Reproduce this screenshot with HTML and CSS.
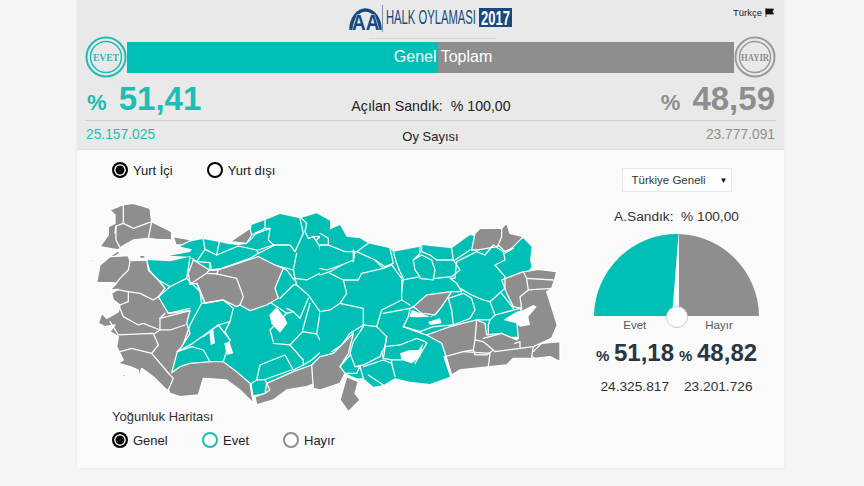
FILE: index.html
```html
<!DOCTYPE html>
<html lang="tr">
<head>
  <meta charset="UTF-8">
  <title>Halk Oylaması 2017</title>
  <link rel="stylesheet" href="styles.css">
</head>
<body>
<div class="panel">
  <header class="head">
    <div class="top">
      <svg class="logo" width="170" height="38" viewBox="0 0 170 38">
        <path d="M4 28 A14.500 20 0 0 1 33 28" class="arc"/>
        <text transform="translate(5 28) scale(.86 1)" class="aa">AA</text>
        <line x1="35.500" y1="3" x2="35.500" y2="30" stroke="#7b93ad"/>
        <text transform="translate(39 22) scale(.577 1)" class="halk">HALK OYLAMASI</text>
        <rect x="132" y="6" width="33" height="19" fill="#17497e"/>
        <text transform="translate(134 23) scale(.65 1)" class="yil">2017</text>
        <line x1="22" y1="36.500" x2="150" y2="36.500" stroke="#d4d8dc"/>
      </svg>
      <div class="lang">Türkçe
        <svg width="9" height="9" viewBox="0 0 9 9"><path d="M1 0v9M1 1h7.500l-1.200 2.500 1.200 2.500h-7.500z" fill="#111" stroke="#111" stroke-width=".8"/></svg>
      </div>
    </div>
    <div class="bar-row">
      <svg class="stamp" width="42" height="42" viewBox="0 0 42 42">
        <circle cx="21" cy="21" r="19.500" class="s-evet s-out"/><circle cx="21" cy="21" r="15.500" class="s-evet"/>
        <text x="21" y="25" class="s-txt t-evet" textLength="26" lengthAdjust="spacingAndGlyphs">EVET</text>
      </svg>
      <div class="bar">
        <div class="bar-fill"></div>
        <span class="bar-txt">Genel Toplam</span>
      </div>
      <svg class="stamp" width="42" height="42" viewBox="0 0 42 42">
        <circle cx="21" cy="21" r="19.500" class="s-hayir s-out"/><circle cx="21" cy="21" r="15.500" class="s-hayir"/>
        <text x="21" y="25" class="s-txt t-hayir" textLength="28" lengthAdjust="spacingAndGlyphs">HAYIR</text>
      </svg>
    </div>
    <div class="score-row">
      <div class="score teal"><span class="pct">%</span> 51,41</div>
      <div class="opened">Açılan Sandık:&nbsp; % 100,00</div>
      <div class="score grey"><span class="pct">%</span> 48,59</div>
    </div>
    <div class="count-row">
      <span class="teal">25.157.025</span>
      <span class="count-lbl">Oy Sayısı</span>
      <span class="grey">23.777.091</span>
    </div>
  </header>

  <main class="body">
    <section class="left">
      <div class="radios r-top">
        <label class="radio r-sel">Yurt İçi</label>
        <label class="radio r-off">Yurt dışı</label>
      </div>
      <svg class="map" width="480" height="218" viewBox="90 195 480 218">
        <!-- west half, traced at 3x from the map -->
        <g transform="translate(90 190) scale(.3333)">
          <polygon class="t" points="172,210 240,214 300,200 238,197 300,186 306,178 272,170 272,160 340,147 385,155 415,162 445,165 470,162 480,135 485,105 525,90 570,72 630,85 680,70 720,92 720,490 690,500 665,525 610,545 530,580 525,610 490,615 485,580 440,560 400,530 300,530 262,555 245,548 262,485 230,400 200,320 205,270 180,240"/>
          <g class="g">
            <polygon points="60,60 100,44 130,40 180,55 185,95 245,125 245,150 200,148 175,145 130,150 95,170 85,180 30,170 55,135 55,110 75,100 75,75"/>
            <polygon points="250,140 305,150 275,165 258,165"/>
            <polygon points="40,212 85,182 90,190 50,215"/>
            <polygon points="0,208 12,210 10,214 0,213"/>
            <polygon points="150,195 165,197 165,205 148,205"/>
            <polygon points="95,552 112,555 100,560"/>
            <polygon points="30,225 60,200 115,197 125,212 170,210 175,240 205,270 225,295 205,320 235,370 300,362 290,400 300,430 275,470 262,485 245,548 270,530 300,520 365,515 400,515 440,545 480,580 490,640 450,600 410,570 340,565 325,615 270,620 240,610 235,600 230,600 190,560 155,535 145,565 145,540 120,530 85,520 100,510 90,490 80,470 85,440 60,425 75,405 45,410 25,400 35,370 50,385 60,380 85,365 90,345 70,330 65,310 85,298 60,300 80,280 70,278 20,278"/>
            <polygon points="295,250 310,210 358,240 385,240 505,200 555,225 580,235 555,295 565,325 530,345 480,362 450,345 440,350 400,330 345,340 330,300 320,280 300,283"/>
            <polygon points="420,155 480,115 485,135 470,160"/>
            <polygon points="495,620 525,610 530,580 610,545 665,525 690,575 650,590 590,600 550,630 500,645"/>
          </g>
          <g class="lines">
            <polyline points="100,44 100,100 78,108 75,130"/>
            <polyline points="100,100 130,115 185,95 175,145"/>
            <polyline points="78,108 78,150 90,172"/>
            <polyline points="115,197 120,215 115,240 90,265 80,278"/>
            <polyline points="60,300 85,300 115,305 150,310 190,330 205,320"/>
            <polyline points="115,305 115,335 90,345"/>
            <polyline points="88,350 100,380 145,405 160,400 210,420"/>
            <polyline points="225,370 210,385 210,420 240,420 285,405"/>
            <polyline points="210,385 300,362"/>
            <polyline points="195,430 210,420"/>
            <polyline points="60,395 85,435 190,430 205,465 185,490 125,475 90,485"/>
            <polyline points="185,490 240,555 250,565 235,600"/>
            <polyline points="345,340 320,280"/>
            <polyline points="350,250 300,283"/>
            <polyline points="358,240 350,250 380,252 440,265 460,320 450,345"/>
            <polyline points="385,240 380,252"/>
            <polyline points="262,485 305,470 340,480 360,515"/>
            <polyline points="280,462 300,405 335,340 400,330 430,355 420,395 385,405 305,462 262,485"/>
            <polyline points="340,440 385,405 420,450 400,515"/>
            <polyline points="420,395 405,425 420,450"/>
            <polyline points="240,290 290,265 330,305 335,340"/>
            <polyline points="205,320 240,290 205,270"/>
            <polyline points="300,355 235,370"/>
            <polyline points="300,200 295,235 290,265"/>
            <polyline points="306,205 320,215 345,178 340,148"/>
            <polyline points="320,215 360,218 358,240"/>
            <polyline points="345,178 380,195 388,155"/>
            <polyline points="380,195 445,168"/>
            <polyline points="360,218 365,240"/>
            <polyline points="505,190 480,205 395,235 365,240"/>
            <polyline points="445,168 500,180 505,190"/>
            <polyline points="485,135 525,115 525,90"/>
            <polyline points="475,155 500,130 540,115 535,150 550,165 505,180"/>
            <polyline points="525,115 540,115"/>
            <polyline points="550,165 600,165 615,185 640,130 630,85"/>
            <polyline points="505,190 555,165"/>
            <polyline points="555,225 610,240 620,190"/>
            <polyline points="615,265 610,240"/>
            <polyline points="580,235 590,240 612,270"/>
            <polyline points="570,325 610,285 620,285 655,315 690,365"/>
            <polyline points="620,285 615,265 650,270 700,245 690,170 680,155 670,140 690,140 720,120"/>
            <polyline points="635,85 650,100 645,125 655,145 670,140"/>
            <polyline points="680,150 695,135"/>
            <polyline points="610,365 630,385 655,325"/>
            <polyline points="590,355 610,365"/>
            <polyline points="638,420 660,340"/>
            <polyline points="600,465 638,425 680,432 690,370"/>
            <polyline points="550,460 600,465 640,510 640,525"/>
            <polyline points="680,432 705,475 665,510 640,525 610,540 585,495 510,525 500,570 520,570 605,540"/>
            <polyline points="485,580 500,570"/>
            <polyline points="525,570 540,600 525,610"/>
            <polyline points="545,340 590,370 540,420 550,455"/>
            <polyline points="590,370 610,365"/>
          </g>
          <g class="w">
            <polygon points="538,375 560,352 585,385 592,400 570,428 545,402"/>
            <polygon points="358,425 370,420 375,460 362,465"/>
            <polygon points="403,460 418,455 430,490 410,495"/>
          </g>
        </g>
        <!-- east half -->
        <g transform="translate(320 210) scale(.3333)">
          <polygon class="t" points="0,20 25,60 60,45 80,80 120,85 145,100 210,115 220,125 300,110 305,105 395,115 450,75 470,80 480,110 540,110 610,85 635,110 630,150 635,170 620,190 600,300 600,380 520,380 400,420 370,440 390,500 330,522 270,515 225,505 190,525 160,530 130,505 110,505 75,490 60,470 85,430 100,375 60,420 0,440"/>
          <g class="g">
            <polygon points="465,70 480,55 545,55 560,40 570,70 610,80 575,115 555,125 535,105 530,110 475,120 455,120"/>
            <polygon points="280,290 320,255 395,245 365,290 345,315 305,310"/>
            <polygon points="545,210 610,185 615,185 655,178 710,185 705,205 695,235 680,245 712,345 695,385 665,400 720,395 720,455 690,440 645,445 580,445 560,465 510,470 420,480 395,495 380,445 365,400 320,375 390,350 470,330 495,340 500,375 545,370 590,390 595,385 590,330 605,295 580,290 560,250"/>
            <polygon points="-25,465 0,440 40,430 100,370 85,430 60,470 75,490 60,520 0,540 -20,535"/>
            <polygon points="80,500 115,515 105,550 120,570 85,605 60,570"/>
          </g>
          <g class="lines">
            <polyline points="545,55 545,80 535,105"/>
            <polyline points="620,205 700,210"/>
            <polyline points="625,240 695,235"/>
            <polyline points="610,185 620,205 625,240 600,260 605,295"/>
            <polyline points="470,330 465,390 460,420 430,425 375,440"/>
            <polyline points="465,390 490,395 520,420 500,435 465,435 460,420"/>
            <polyline points="430,425 510,430 505,470"/>
            <polyline points="520,420 525,425 600,415 600,395 585,400"/>
            <polyline points="490,385 545,370"/>
            <polyline points="640,410 600,415"/>
            <polyline points="640,425 665,400"/>
            <polyline points="645,445 635,440 640,410 695,385"/>
            <polyline points="0,70 25,85 25,105 75,125 110,125 145,100"/>
            <polyline points="0,105 25,105"/>
            <polyline points="0,175 20,180 65,165 100,150 100,120"/>
            <polyline points="65,165 30,185 0,195"/>
            <polyline points="100,155 105,125"/>
            <polyline points="110,125 165,150 195,170 220,160 210,115"/>
            <polyline points="165,150 190,175 125,190 115,210 70,210 30,190"/>
            <polyline points="70,210 80,250 60,280 30,300 0,305"/>
            <polyline points="190,175 215,165 245,205 245,270"/>
            <polyline points="60,280 130,295 130,345 90,370 65,405 35,425"/>
            <polyline points="130,345 170,350 185,300 245,270 270,285"/>
            <polyline points="130,350 100,395 90,430 105,470 130,465 180,440 195,410 200,380 170,350"/>
            <polyline points="60,470 90,435"/>
            <polyline points="105,470 120,470 110,490 75,490"/>
            <polyline points="120,470 130,505"/>
            <polyline points="130,470 190,450 215,460 225,500"/>
            <polyline points="145,495 190,525"/>
            <polyline points="190,310 270,295 280,290"/>
            <polyline points="250,350 265,320 270,295"/>
            <polyline points="250,350 305,370 320,375"/>
            <polyline points="200,380 195,410 240,405 290,385 315,395 320,400"/>
            <polyline points="185,425 190,445 215,450 215,465"/>
            <polyline points="190,445 195,415"/>
            <polyline points="215,450 245,450"/>
            <polyline points="285,460 320,400"/>
            <polyline points="220,125 230,160 240,185 250,205 245,245"/>
            <polyline points="300,110 300,130 280,150 285,180 300,200 250,210"/>
            <polyline points="305,105 305,125 330,135 350,150 400,150 395,115"/>
            <polyline points="280,150 305,135 335,150 345,180 340,210 300,205"/>
            <polyline points="345,205 395,200 420,180 400,150"/>
            <polyline points="405,150 450,120"/>
            <polyline points="410,155 405,205 390,205 410,220 425,245 395,245"/>
            <polyline points="420,235 455,255 490,270 510,275 555,235 555,200 525,165 555,150 550,125 520,105 495,135 470,125 410,155"/>
            <polyline points="385,265 430,250 455,265 465,300 450,325 400,345 395,300 385,265"/>
            <polyline points="510,275 525,315 510,330 470,330"/>
            <polyline points="545,250 580,295"/>
            <polyline points="525,315 600,295"/>
            <polyline points="505,345 510,330"/>
            <polyline points="505,345 505,375"/>
            <polyline points="555,130 580,115"/>
            <polyline points="250,350 300,365 340,350 400,345"/>
          </g>
          <g class="w">
            <polygon points="550,330 590,305 610,300 640,285 650,290 625,320 630,345 600,350 590,340"/>
            <polygon points="240,430 270,420 295,420 310,400 300,440 275,460 245,450"/>
            <polygon points="268,320 275,300 330,320 350,310 335,320 290,322"/>
            <polygon points="325,335 360,325 365,340 330,345"/>
          </g>
        </g>
      </svg>
      <div class="legend">
        <div class="legend-title">Yoğunluk Haritası</div>
        <div class="radios r-bottom">
          <label class="radio r-sel r-genel">Genel</label>
          <label class="radio r-evet">Evet</label>
          <label class="radio r-hayir">Hayır</label>
        </div>
      </div>
    </section>

    <aside class="right">
      <div class="select"><span>Türkiye Geneli</span><span class="caret">▼</span></div>
      <div class="sandik">A.Sandık:&nbsp; % 100,00</div>
      <div class="gauge">
        <svg width="167" height="84" viewBox="0 0 167 84">
          <path d="M1 83 A83 83 0 0 1 85.500 1 L79 83 Z" fill="#00bfb5"/>
          <path d="M86 1 A83 83 0 0 1 166 83 L86 83 Z" fill="#8f8e8e"/>
        </svg>
        <div class="knob"></div>
      </div>
      <div class="gauge-lbls"><span>Evet</span><span>Hayır</span></div>
      <div class="res-row">
        <span class="res"><small>%</small> 51,18</span>
        <span class="res"><small>%</small> 48,82</span>
      </div>
      <div class="num-row"><span>24.325.817</span><span>23.201.726</span></div>
    </aside>
  </main>
</div>
</body>
</html>
```

FILE: styles.css
```css
* { box-sizing: border-box; }

body {
  margin: 0;
  height: 486px;
  overflow: hidden;
  background: #f2f6f9;
  font-family: "Liberation Sans", Arial, sans-serif;
  color: #222;
}

.panel {
  width: 707px;
  margin-left: 77px;
  background: #fafafa;
  height: 468px;
  box-shadow: 0 0 4px rgba(0, 0, 0, .05);
}

.teal { color: #1dbdb3; }
.grey { color: #8f8e8e; }

/* top part */
.head {
  height: 150px;
  background: #e9e9e9;
  border-bottom: 1px solid #dedede;
  padding: 0 8px;
}

.top {
  height: 41px;
  position: relative;
  display: flex;
  justify-content: center;
}

.logo { margin: 2px 0 0 2px; }
.arc { fill: none; stroke: #17497e; stroke-width: 3.500; }
.aa { font: bold 22px "Liberation Sans", sans-serif; fill: #17497e; stroke: #e9e9e9; stroke-width: 1; paint-order: stroke; }
.halk { font: 19.500px "Liberation Sans", sans-serif; fill: #17497e; }
.yil { font: bold 20px "Liberation Sans", sans-serif; fill: #fff; }

.lang {
  position: absolute;
  right: 2px;
  top: 7px;
  font-size: 9.500px;
  color: #222;
  display: flex;
  align-items: center;
  gap: 3px;
}

.bar-row {
  display: flex;
  align-items: center;
  height: 32px;
}

.stamp { flex: none; }
.stamp circle { fill: none; stroke-width: 1.500; }
.stamp .s-out { stroke-width: 2; }
.s-evet { stroke: #1dbdb3; }
.s-hayir { stroke: #9a9a9a; }
.s-txt { font: bold 11px "Liberation Serif", serif; text-anchor: middle; }
.t-evet { fill: #1dbdb3; }
.t-hayir { fill: #8f8e8e; }

.bar {
  flex: 1;
  height: 31px;
  background: #8f8e8e;
  display: flex;
  position: relative;
  justify-content: center;
  align-items: center;
  padding-left: 25px;
}

.bar-fill {
  position: absolute;
  left: 0;
  top: 0;
  bottom: 0;
  width: 51.200%;
  background: #00bfb5;
}

.bar-txt {
  position: relative;
  color: #fff;
  font-size: 16px;
}

.score-row {
  display: flex;
  justify-content: space-between;
  align-items: flex-end;
  height: 48px;
  padding: 0 1px 0 2px;
  border-bottom: 1px solid #cfcfcf;
}

.score {
  font-size: 33px;
  font-weight: bold;
  line-height: 34px;
}

.score .pct { font-size: 22px; margin-right: 3px; }

.opened {
  font-size: 14.200px;
  margin-bottom: 5px;
  line-height: 18px;
  color: #222;
}

.count-row {
  display: flex;
  justify-content: space-between;
  align-items: center;
  height: 27px;
  padding: 0 1px;
  font-size: 13.800px;
}

.count-lbl {
  font-size: 13px;
  color: #222;
  padding-top: 4px;
}

/* map + side column */
.body {
  display: flex;
  height: 318px;
}

.left {
  width: 513px;
  padding-left: 13px;
}

.radios { display: flex; font-size: 13px; }
.r-top { padding: 11px 0 0 22px; gap: 34px; height: 36px; }
.r-bottom { padding: 0 0 0 22px; margin-top: 6px; }

.radio {
  display: flex;
  align-items: center;
  gap: 5px;
  color: #222;
  height: 18px;
}

.radio::before {
  content: "";
  box-sizing: border-box;
  width: 16px;
  height: 16px;
  border-radius: 50%;
  border: 2px solid #000;
  background: #fff;
}

.r-sel::before { background: #000; box-shadow: inset 0 0 0 1.500px #fff; }
.r-evet::before { border-color: #1dbdb3; }
.r-hayir::before { border-color: #8f8e8e; }
.r-genel { width: 90px; }
.r-evet { width: 81px; }

.map { display: block; margin-top: 9px; }
.g { fill: #8f8e8e; stroke: #fff; stroke-width: 3.800; stroke-linejoin: round; }
.t { fill: #00bfb5; }
.lines polyline { fill: none; stroke: #fff; stroke-width: 3.800; stroke-linejoin: round; stroke-linecap: round; }
.w { fill: #fff; }

.legend { margin-top: -4px; }
.legend-title { padding-left: 22px; font-size: 13px; color: #333; line-height: 16px; }

.right {
  width: 173px;
  display: flex;
  flex-direction: column;
  align-items: center;
  padding-top: 18px;
}

.select {
  width: 110px;
  height: 24px;
  background: #fff;
  border: 1px solid #e8e8e8;
  display: flex;
  align-items: center;
  justify-content: space-between;
  padding: 0 3px 0 9px;
  font-size: 11.500px;
  color: #333;
}

.caret { font-size: 8px; color: #111; }

.sandik {
  font-size: 13.700px;
  color: #333;
  margin-top: 16px;
  line-height: 17px;
}

.gauge {
  position: relative;
  height: 84px;
  margin-top: 8px;
  width: 167px;
}

.gauge svg { display: block; }

.knob {
  position: absolute;
  left: 73px;
  bottom: -11px;
  width: 22px;
  height: 22px;
  border-radius: 50%;
  background: #fff;
  border: 1px solid #ccc;
}

.gauge-lbls {
  display: flex;
  width: 100%;
  justify-content: center;
  gap: 59px;
  font-size: 11.500px;
  color: #555;
  margin-top: 0;
  line-height: 16px;
  padding-left: 3px;
}

.res-row {
  display: flex;
  gap: 5px;
  margin-top: 5px;
  line-height: 30px;
  color: #2a3542;
  font-size: 24px;
  font-weight: bold;
}

.res { word-spacing: -2px; }
.res small { font-size: 15px; }

.num-row {
  display: flex;
  gap: 15px;
  margin-top: 7px;
  font-size: 13.700px;
  color: #333;
  line-height: 18px;
}
```
